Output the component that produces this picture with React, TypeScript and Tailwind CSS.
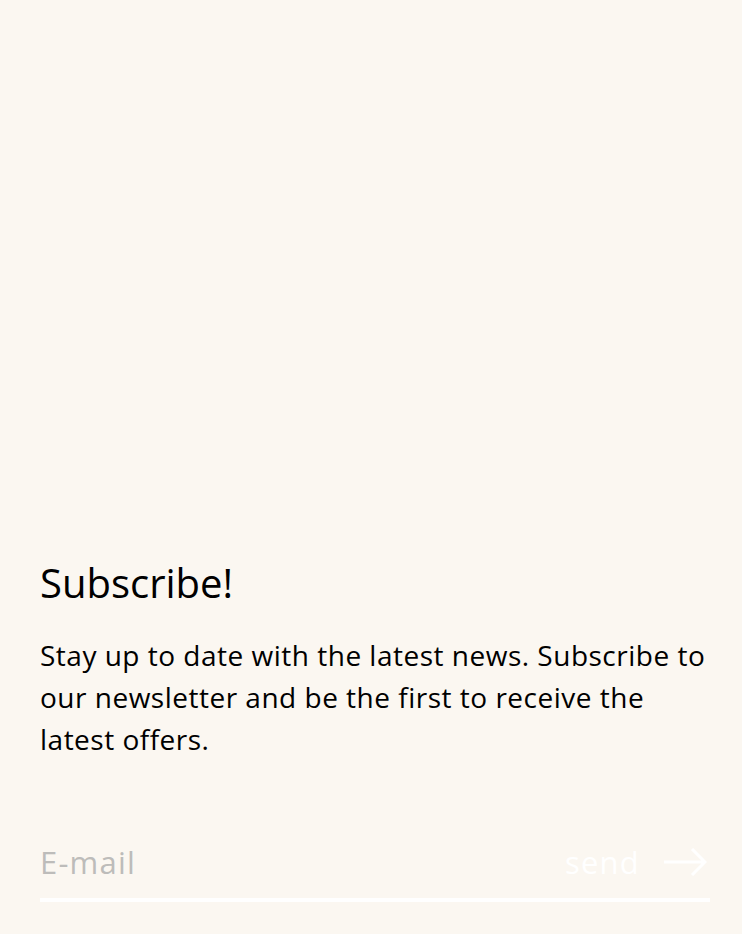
export default function App() {
  return (
    <div className="min-h-[934px] bg-[#fbf7f1] flex flex-col justify-end pl-10 pr-8 pb-8 font-['Open_Sans',sans-serif]">
      <h2 className="text-[40px] leading-[48px] text-black">Subscribe!</h2>
      <p className="mt-[27px] text-[28px] leading-[42px] tracking-[0.5px] text-black">
        Stay up to date with the latest news. Subscribe to our newsletter and be the first to receive the latest offers.
      </p>
      <form className="mt-[80px] flex items-center border-b-4 border-white pb-[14px]">
        <input
          type="email"
          placeholder="E-mail"
          className="flex-1 min-w-0 bg-transparent text-[31px] leading-[44px] tracking-[1.2px] outline-none placeholder:text-[#bdbcba]"
        />
        <button type="button" className="flex items-center gap-6 pr-[3px] text-white text-[31px] leading-[44px] tracking-[1.2px]">
          send
          <svg width="43" height="28" viewBox="0 0 43 28" fill="none" stroke="currentColor" strokeWidth="3">
            <path d="M0 14h40M28 1l13 13-13 13" />
          </svg>
        </button>
      </form>
    </div>
  );
}
